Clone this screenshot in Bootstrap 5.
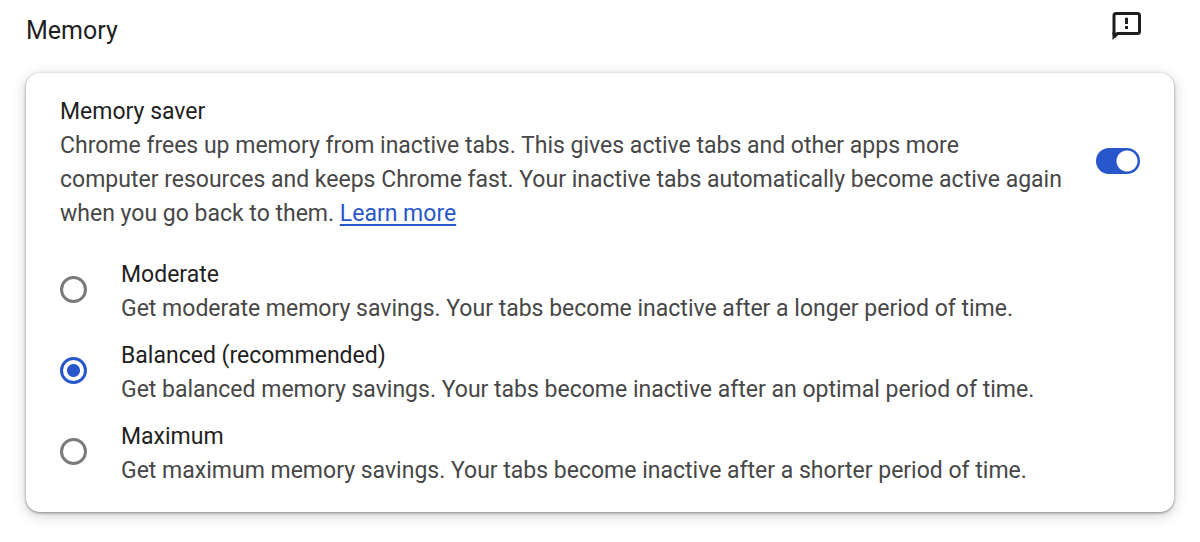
<!DOCTYPE html>
<html lang="en">
<head>
<meta charset="utf-8">
<meta name="viewport" content="width=device-width, initial-scale=1">
<title>Memory</title>
<link href="https://cdn.jsdelivr.net/npm/bootstrap@5.3.0/dist/css/bootstrap.min.css" rel="stylesheet">
<style>
body{font-family:Roboto,"Liberation Sans",sans-serif;font-size:23px;line-height:34px;color:#1f1f1f;background:#fff}
.page{padding:12px 26px 30px}
.page-head{padding-right:33px;margin-bottom:23px}
.page-title{font-size:25px;line-height:38px}
.feedback{line-height:0;color:#1f1f1f}
.panel{border-radius:14px;box-shadow:0 1px 3px rgba(0,0,0,.4),0 3px 14px rgba(0,0,0,.2);padding:18px 34px 24px}
.secondary{color:#474747}
.learn{color:#2757cb;text-underline-offset:3px;text-decoration-thickness:2px}
.saver{padding-top:4px;padding-right:30px}
.form-switch .form-check-input.toggle{width:44px;height:26px;margin:0;border:0;background-color:#2757cb;background-size:22px;background-position:right 2px center;background-image:radial-gradient(circle,#fff 10px,transparent 11px);background-repeat:no-repeat}
.options{margin-top:21px;gap:7px}
.form-check-input.choice{width:27px;height:27px;margin:0;border:3px solid #7a7a7a;flex:none}
.form-check-input.choice:checked{border-color:#2757cb;background-color:#fff;background-image:radial-gradient(circle,#2757cb 6px,transparent 7px)}
.option{gap:34px}
.option label{padding-top:6px}
</style>
</head>
<body>
<main class="page">
<header class="page-head d-flex justify-content-between align-items-start">
<h1 class="page-title fw-normal mb-0">Memory</h1>
<button type="button" class="feedback btn p-0 border-0" aria-label="Send feedback"><svg width="29" height="28" viewBox="0 0 29 28" fill="none" stroke="currentColor" stroke-width="3" aria-hidden="true"><path d="M2 23V3.500Q2 1.500 4 1.500H25.500Q27.500 1.500 27.500 3.500V19.500Q27.500 21.500 25.500 21.500H5.500L2 25"/><path fill="currentColor" stroke="none" d="M.5 20V28L7 21.500zM13 5.800h3v6.200h-3zM13 14h3v3h-3z"/></svg></button>
</header>
<section class="panel">
<div class="d-flex align-items-center justify-content-between">
<div class="saver"><label for="saver">Memory saver</label>
<p class="secondary mb-0">Chrome frees up memory from inactive tabs. This gives active tabs and other apps more<br> computer resources and keeps Chrome fast. Your inactive tabs automatically become active again when you go back to them. <a class="learn" href="#">Learn more</a></p></div>
<div class="form-switch p-0 d-flex"><input class="form-check-input toggle" type="checkbox" role="switch" id="saver" checked></div>
</div>
<div class="options d-flex flex-column" role="radiogroup" aria-label="Memory savings">
<div class="option d-flex align-items-center"><input class="form-check-input choice" type="radio" name="level" id="moderate"><label for="moderate"><span class="d-block">Moderate</span><span class="d-block secondary">Get moderate memory savings. Your tabs become inactive after a longer period of time.</span></label></div>
<div class="option d-flex align-items-center"><input class="form-check-input choice" type="radio" name="level" id="balanced" checked><label for="balanced"><span class="d-block">Balanced (recommended)</span><span class="d-block secondary">Get balanced memory savings. Your tabs become inactive after an optimal period of time.</span></label></div>
<div class="option d-flex align-items-center"><input class="form-check-input choice" type="radio" name="level" id="maximum"><label for="maximum"><span class="d-block">Maximum</span><span class="d-block secondary">Get maximum memory savings. Your tabs become inactive after a shorter period of time.</span></label></div>
</div>
</section>
</main>
<script src="https://cdn.jsdelivr.net/npm/bootstrap@5.3.0/dist/js/bootstrap.bundle.min.js"></script>
</body>
</html>
